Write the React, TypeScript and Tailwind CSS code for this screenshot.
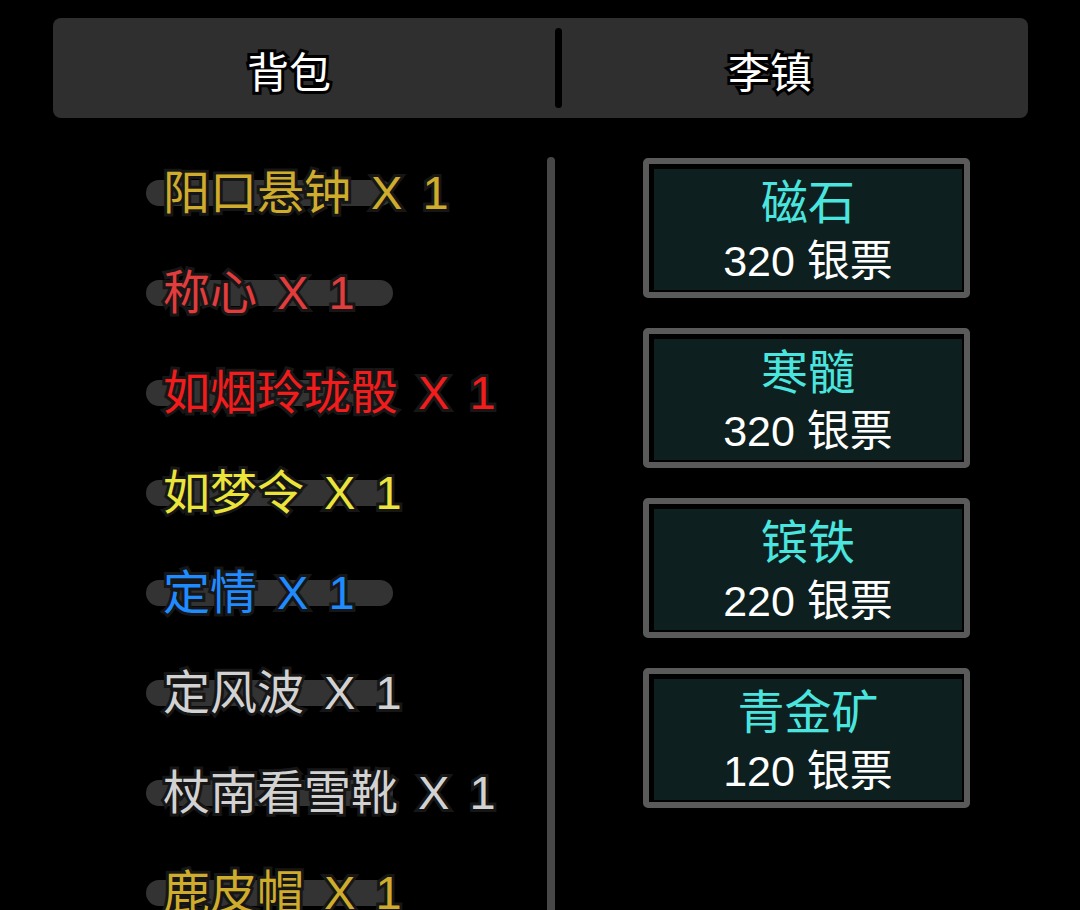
const items = [
  { name: "阳口悬钟", count: 1, color: "text-[#cfac2c]" },
  { name: "称心", count: 1, color: "text-[#e23c3c]" },
  { name: "如烟玲珑骰", count: 1, color: "text-[#f21c1c]" },
  { name: "如梦令", count: 1, color: "text-[#ebe43a]" },
  { name: "定情", count: 1, color: "text-[#1f8bff]" },
  { name: "定风波", count: 1, color: "text-[#d2d2d2]" },
  { name: "杖南看雪靴", count: 1, color: "text-[#d2d2d2]" },
  { name: "鹿皮帽", count: 1, color: "text-[#cfac2c]" },
];

const goods = [
  { name: "磁石", price: 320 },
  { name: "寒髓", price: 320 },
  { name: "镔铁", price: 220 },
  { name: "青金矿", price: 120 },
];

// dark outline round the coloured labels
const outline = "[-webkit-text-stroke:6px_#161616] [paint-order:stroke_fill]";
const headOutline = "[-webkit-text-stroke:6px_#000] [paint-order:stroke_fill]";

export default function App() {
  return (
    <div
      className="h-[910px] overflow-hidden bg-black"
      style={{ fontFamily: '"Liberation Sans", "Noto Sans CJK SC", sans-serif' }}
    >
      {/* Tabs */}
      <div className="ml-[53px] mt-[18px] flex h-[100px] w-[975px] items-center rounded-[8px] bg-[#2f2f2f]">
        <div className={`flex w-[502px] justify-center pr-[30px] pt-[10px] text-[42px] text-white ${headOutline}`}>背包</div>
        <div className="h-[80px] w-[7px] rounded-full bg-black" />
        <div className={`flex flex-1 justify-center pr-[50px] pt-[10px] text-[42px] text-white ${headOutline}`}>李镇</div>
      </div>

      <div className="mt-[39px] flex h-[753px]">
        {/* Bag list */}
        <div className="flex w-[547px] flex-col gap-[50px] pl-[146px] pt-[11px]">
          {items.map((it) => (
            <div key={it.name} className="grid h-[50px] items-center">
              <div className="col-start-1 row-start-1 h-[26px] w-[247px] rounded-full bg-[#333333]" />
              <div
                className={`col-start-1 row-start-1 whitespace-nowrap pl-[17px] text-[47px] leading-[50px] [word-spacing:7px] ${it.color} ${outline}`}
              >
                {it.name} X {it.count}
              </div>
            </div>
          ))}
        </div>

        <div className="w-[8px] rounded-t-full bg-[#474747]" />

        {/* Shop */}
        <div className="flex flex-col gap-[30px] pl-[88px] pt-[1px]">
          {goods.map((g) => (
            <div
              key={g.name}
              className="h-[140px] w-[327px] rounded-[5px] border-[6px] border-[#5a5a5a] bg-black pb-[2px] pl-[5px] pr-[2px] pt-[5px]"
            >
              <div className="flex h-full flex-col items-center bg-[#0d1f1e] pt-[6px]">
                <div className="text-[47px] leading-[56px] text-[#4be5df]">{g.name}</div>
                <div className="mt-[3px] text-[43px] leading-[54px] text-white">{g.price} 银票</div>
              </div>
            </div>
          ))}
        </div>
      </div>
    </div>
  );
}
